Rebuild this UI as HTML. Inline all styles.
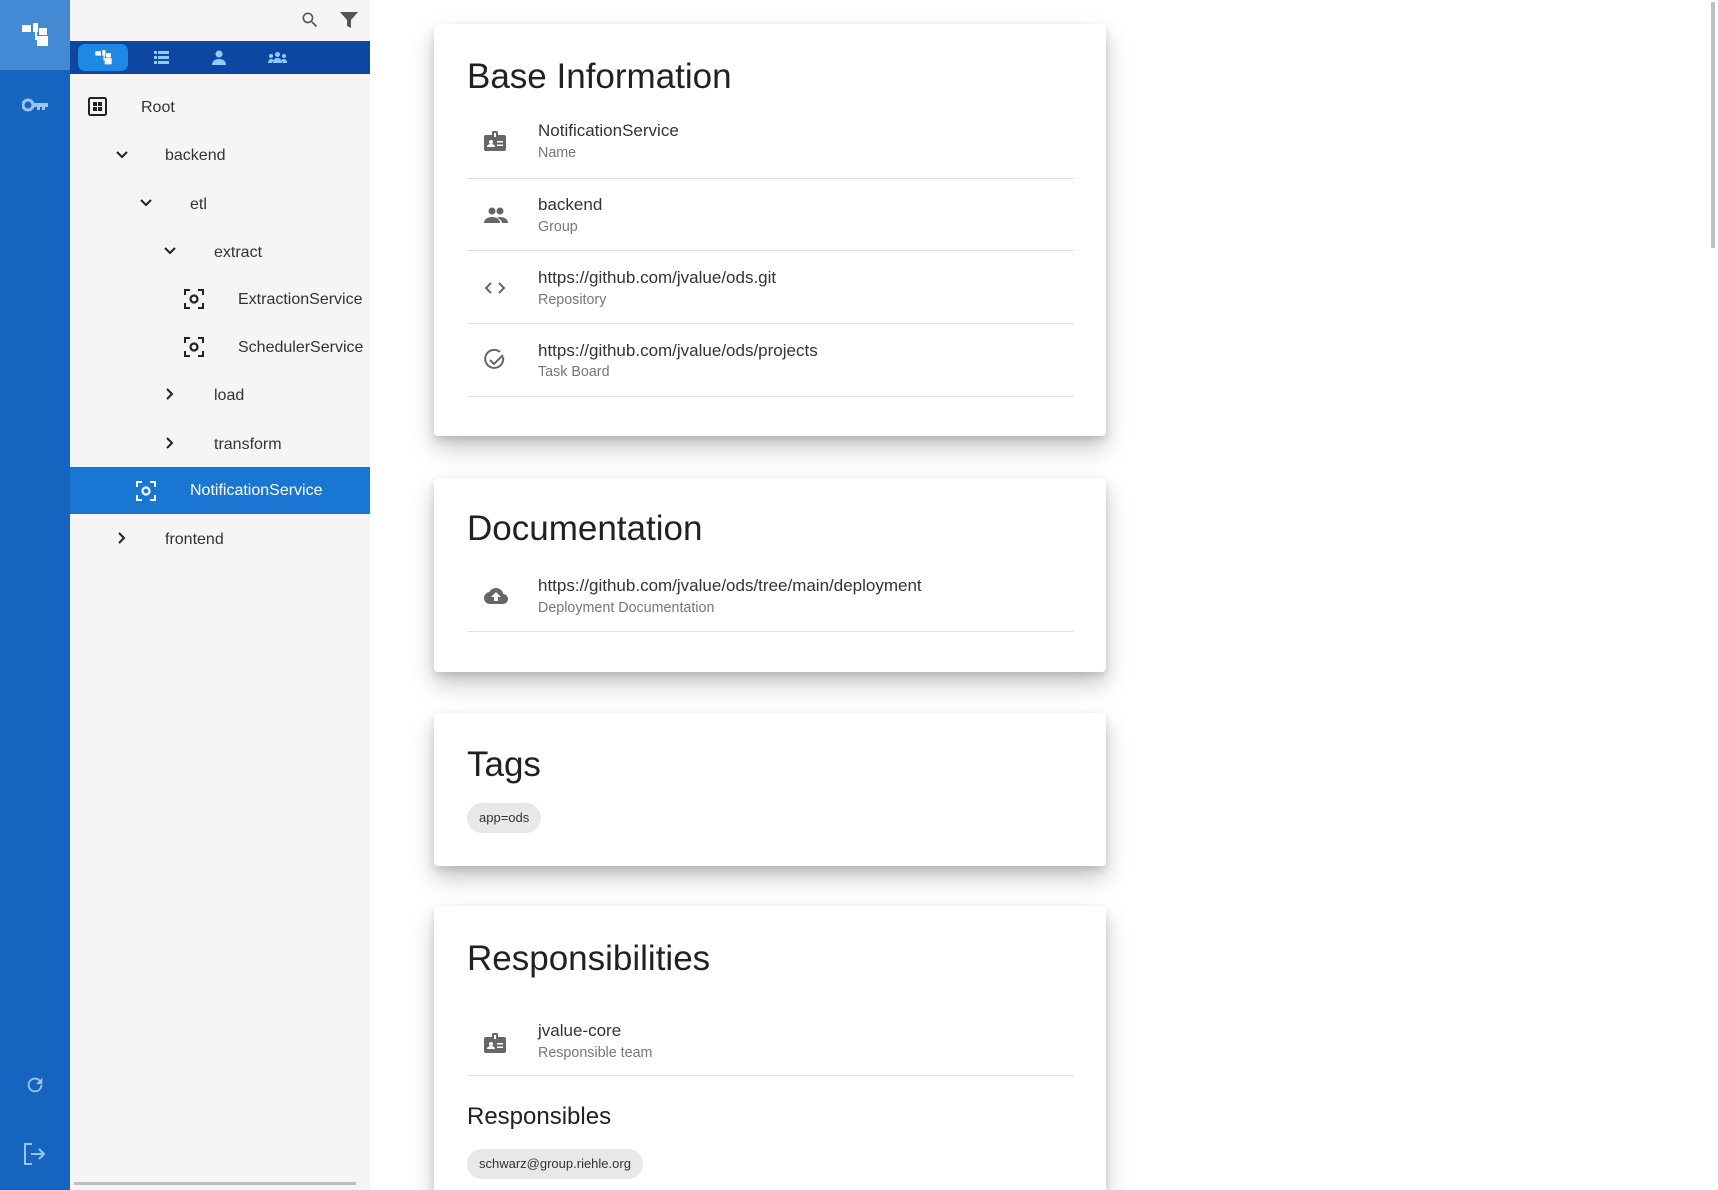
<!DOCTYPE html>
<html style="overflow:hidden;height:1190px"><head><meta charset="utf-8"><style>
*{margin:0;padding:0;box-sizing:border-box}
body{width:1718px;height:1190px;overflow:hidden;background:#fff;font-family:"Liberation Sans",sans-serif;position:relative;color:#212121}
.a{position:absolute}
.rail{left:0;top:0;width:70px;height:1190px;background:#1565c0}
.panel{left:70px;top:0;width:300px;height:1190px;background:#f5f5f5}
.tabs{left:70px;top:41px;width:300px;height:33px;background:#0d47a1}
.t{position:absolute;font-size:16px;line-height:20px;color:#333;white-space:nowrap}
.card{position:absolute;left:434px;width:672px;background:#fff;border-radius:4px;box-shadow:0 12px 24px rgba(0,0,0,.22),0 4px 8px rgba(0,0,0,.12)}
.title{position:absolute;left:33px;font-size:35px;line-height:40px;color:#212121}
.row{position:absolute;left:33px;width:607px;height:73px;border-bottom:1px solid #e0e0e0}
.row svg{position:absolute;left:17px;top:26px}
.m{position:absolute;left:71px;font-size:17px;line-height:20px;color:#333;white-space:nowrap}
.s{position:absolute;left:71px;font-size:14.3px;line-height:18px;color:#777;white-space:nowrap}
.chip{position:absolute;left:33px;height:30px;border-radius:15px;background:#e8e8e8;font-size:13px;line-height:30px;padding:0 12px;color:#333}
</style></head><body>
<div class="a rail"></div>
<div class="a" style="left:0;top:0;width:70px;height:70px;background:#4389d4"></div>
<svg class="a" style="left:22px;top:23px" width="26" height="24" viewBox="0 0 26 24"><g fill="#fff"><rect x="0" y="2" width="9" height="7"/><rect x="11" y="0" width="5" height="9"/><rect x="13" y="7" width="2" height="10"/><rect x="15" y="13" width="11" height="10"/><rect x="17" y="5" width="8" height="7"/></g></svg>
<svg class="a" style="left:22px;top:98px" width="27" height="14" viewBox="0 0 27 14"><circle cx="6" cy="7" r="5" fill="none" stroke="#9cc3ee" stroke-width="3"/><path d="M11 5h15v4h-3v3h-3v-3h-2v3h-3v-3h-4z" fill="#9cc3ee"/></svg>
<svg class="a" style="left:24px;top:1074px" width="22" height="22" viewBox="0 0 24 24"><path fill="#9cc3ee" d="M17.65 6.35A7.958 7.958 0 0012 4a8 8 0 108 8h-2.08A5.99 5.99 0 0112 18a6 6 0 110-12c1.66 0 3.14.69 4.22 1.78L13 11h7V4l-2.35 2.35z"/></svg>
<svg class="a" style="left:23px;top:1143px" width="24" height="22" viewBox="0 0 24 22"><path d="M9 1H2v20h7" fill="none" stroke="#9cc3ee" stroke-width="2"/><path d="M8 11h13M16 6l5 5-5 5" fill="none" stroke="#9cc3ee" stroke-width="2"/></svg>

<div class="a panel"></div>
<svg class="a" style="left:300px;top:10px" width="20" height="20" viewBox="0 0 24 24"><path fill="#555" d="M15.5 14h-.79l-.28-.27A6.47 6.47 0 0016 9.5 6.5 6.5 0 109.5 16c1.61 0 3.09-.59 4.23-1.57l.27.28v.79l5 4.99L20.49 19l-4.99-5zm-6 0C7.01 14 5 11.99 5 9.5S7.01 5 9.5 5 14 7.01 14 9.5 11.99 14 9.5 14z"/></svg>
<svg class="a" style="left:340px;top:11px" width="18" height="18" viewBox="0 0 18 18"><path fill="#555" d="M0 1h18l-7 8v8l-4-2V9z"/></svg>
<div class="a tabs"></div>
<div class="a" style="left:78px;top:44px;width:50px;height:27px;border-radius:7px;background:#1e88e5"></div>
<svg class="a" style="left:95px;top:50px" width="17" height="15" viewBox="0 0 26 24"><g fill="#fff"><rect x="0" y="2" width="9" height="7"/><rect x="11" y="0" width="5" height="9"/><rect x="13" y="7" width="2" height="10"/><rect x="15" y="13" width="11" height="10"/><rect x="17" y="5" width="8" height="7"/></g></svg>
<svg class="a" style="left:154px;top:51px" width="15" height="13" viewBox="0 0 15 13"><g fill="#90caf9"><rect x="0" y="0" width="3" height="3"/><rect x="4" y="0" width="11" height="3"/><rect x="0" y="5" width="3" height="3"/><rect x="4" y="5" width="11" height="3"/><rect x="0" y="10" width="3" height="3"/><rect x="4" y="10" width="11" height="3"/></g></svg>
<svg class="a" style="left:212px;top:50px" width="14" height="15" viewBox="0 0 14 15"><circle cx="7" cy="4" r="3.5" fill="#90caf9"/><path d="M0 15c0-4 3-6 7-6s7 2 7 6z" fill="#90caf9"/></svg>
<svg class="a" style="left:268px;top:52px" width="19" height="11" viewBox="0 0 19 11"><g fill="#90caf9"><circle cx="9.5" cy="2.5" r="2.5"/><circle cx="3" cy="4" r="2"/><circle cx="16" cy="4" r="2"/><path d="M5 11c0-3 2-5 4.5-5S14 8 14 11zM0 11c0-2 1-4 3-4s2.5 1 2.5 1L4 11zM19 11c0-2-1-4-3-4s-2.5 1-2.5 1L15 11z"/></g></svg>

<svg class="a" style="left:88px;top:97px" width="19" height="19" viewBox="0 0 19 19"><rect x="1" y="1" width="17" height="17" rx="1.5" fill="none" stroke="#222" stroke-width="2"/><g fill="#222"><rect x="5" y="5" width="4" height="4"/><rect x="10" y="5" width="4" height="4"/><rect x="5" y="10" width="4" height="4"/><rect x="10" y="10" width="4" height="4"/></g></svg>
<div class="t" style="left:141px;top:98px">Root</div>
<svg class="a" style="left:115px;top:150px" width="14" height="10"><path d="M2 2l5 5 5-5" fill="none" stroke="#222" stroke-width="2"/></svg>
<div class="t" style="left:165px;top:146px">backend</div>
<svg class="a" style="left:139px;top:198px" width="14" height="10"><path d="M2 2l5 5 5-5" fill="none" stroke="#222" stroke-width="2"/></svg>
<div class="t" style="left:190px;top:195px">etl</div>
<svg class="a" style="left:163px;top:246px" width="14" height="10"><path d="M2 2l5 5 5-5" fill="none" stroke="#222" stroke-width="2"/></svg>
<div class="t" style="left:214px;top:243px">extract</div>
<svg class="a" style="left:184px;top:289px" width="20" height="20" viewBox="0 0 20 20"><path d="M1 6V1h5M14 1h5v5M19 14v5h-5M6 19H1v-5" fill="none" stroke="#222" stroke-width="2"/><circle cx="10" cy="10" r="3.5" fill="none" stroke="#222" stroke-width="2.2"/></svg>
<div class="t" style="left:238px;top:290px">ExtractionService</div>
<svg class="a" style="left:184px;top:337px" width="20" height="20" viewBox="0 0 20 20"><path d="M1 6V1h5M14 1h5v5M19 14v5h-5M6 19H1v-5" fill="none" stroke="#222" stroke-width="2"/><circle cx="10" cy="10" r="3.5" fill="none" stroke="#222" stroke-width="2.2"/></svg>
<div class="t" style="left:238px;top:338px">SchedulerService</div>
<svg class="a" style="left:165px;top:387px" width="10" height="14"><path d="M2 2l5 5-5 5" fill="none" stroke="#222" stroke-width="2"/></svg>
<div class="t" style="left:214px;top:386px">load</div>
<svg class="a" style="left:165px;top:436px" width="10" height="14"><path d="M2 2l5 5-5 5" fill="none" stroke="#222" stroke-width="2"/></svg>
<div class="t" style="left:214px;top:435px">transform</div>
<div class="a" style="left:70px;top:467px;width:300px;height:47px;background:#1976d2"></div>
<svg class="a" style="left:136px;top:481px" width="20" height="20" viewBox="0 0 20 20"><path d="M1 6V1h5M14 1h5v5M19 14v5h-5M6 19H1v-5" fill="none" stroke="#fff" stroke-width="2"/><circle cx="10" cy="10" r="3.5" fill="none" stroke="#fff" stroke-width="2.2"/></svg>
<div class="t" style="left:190px;top:481px;color:#fff">NotificationService</div>
<svg class="a" style="left:117px;top:531px" width="10" height="14"><path d="M2 2l5 5-5 5" fill="none" stroke="#222" stroke-width="2"/></svg>
<div class="t" style="left:165px;top:530px">frontend</div>
<div class="a" style="left:74px;top:1182px;width:282px;height:3px;background:#bdbdbd"></div>

<div class="a" style="left:1711px;top:2px;width:4px;height:246px;background:#c1c1c1"></div>

<div class="card" style="top:24px;height:412px">
 <div class="title" style="top:33px">Base Information</div>
 <div class="row" style="top:81px;height:74px"><svg width="22" height="20" viewBox="0 0 22 20"><path fill="#666" d="M8 4V2a3 3 0 016 0v2h6a2 2 0 012 2v12a2 2 0 01-2 2H2a2 2 0 01-2-2V6a2 2 0 012-2zm2-2v4h2V2z"/><g fill="#fff"><circle cx="7" cy="11" r="2"/><path d="M3 16c0-2 2-3 4-3s4 1 4 3zM13 10h6v1.5h-6zM13 13.5h6V15h-6z"/></g></svg><div class="m" style="top:16px">NotificationService</div><div class="s" style="top:39px">Name</div></div>
 <div class="row" style="top:154px"><svg width="24" height="16" viewBox="0 0 24 16" style="top:29px"><g fill="#666"><circle cx="8" cy="4" r="3.5"/><circle cx="16" cy="4" r="3.5"/><path d="M0 16c0-4 4-6 8-6s8 2 8 6zM13 10.5c1-.3 2-.5 3-.5 4 0 8 2 8 6h-6c0-2-2-4-5-5.5z"/></g></svg><div class="m" style="top:17px">backend</div><div class="s" style="top:40px">Group</div></div>
 <div class="row" style="top:227px"><svg width="22" height="14" viewBox="0 0 22 14" style="top:30px"><path d="M7 2L2 7l5 5M15 2l5 5-5 5" fill="none" stroke="#666" stroke-width="2"/></svg><div class="m" style="top:17px">https://github.com/jvalue/ods.git</div><div class="s" style="top:40px">Repository</div></div>
 <div class="row" style="top:300px"><svg width="22" height="22" viewBox="0 0 22 22" style="top:25px"><path d="M19 8a9 9 0 11-3-5" fill="none" stroke="#666" stroke-width="2"/><path d="M6 11l4 4 9-9" fill="none" stroke="#666" stroke-width="2"/></svg><div class="m" style="top:17px">https://github.com/jvalue/ods/projects</div><div class="s" style="top:39px">Task Board</div></div>
</div>

<div class="card" style="top:478px;height:194px">
 <div class="title" style="top:31px">Documentation</div>
 <div class="row" style="top:81px"><svg width="24" height="16" viewBox="0 0 24 16" style="top:29px"><path fill="#666" d="M19.35 6.04A7.49 7.49 0 0012 0C9.11 0 6.6 1.64 5.35 4.04A5.99 5.99 0 000 10c0 3.31 2.69 6 6 6h13c2.76 0 5-2.24 5-5 0-2.64-2.05-4.78-4.65-4.96z"/><path fill="#fff" d="M12 4l-5 5h3v4h4V9h3z"/></svg><div class="m" style="top:17px">https://github.com/jvalue/ods/tree/main/deployment</div><div class="s" style="top:40px">Deployment Documentation</div></div>
</div>

<div class="card" style="top:713px;height:153px">
 <div class="title" style="top:32px">Tags</div>
 <div class="chip" style="top:90px">app=ods</div>
</div>

<div class="card" style="top:906px;height:284px;border-radius:4px 4px 0 0">
 <div class="title" style="top:33px">Responsibilities</div>
 <div class="row" style="top:97px"><svg width="22" height="20" viewBox="0 0 22 20" style="top:30px"><path fill="#666" d="M8 4V2a3 3 0 016 0v2h6a2 2 0 012 2v12a2 2 0 01-2 2H2a2 2 0 01-2-2V6a2 2 0 012-2zm2-2v4h2V2z"/><g fill="#fff"><circle cx="7" cy="11" r="2"/><path d="M3 16c0-2 2-3 4-3s4 1 4 3zM13 10h6v1.5h-6zM13 13.5h6V15h-6z"/></g></svg><div class="m" style="top:18px">jvalue-core</div><div class="s" style="top:41px">Responsible team</div></div>
 <div class="a" style="left:33px;top:197px;font-size:24px;line-height:28px;color:#212121">Responsibles</div>
 <div class="chip" style="top:243px">schwarz@group.riehle.org</div>
</div>
</body></html>
